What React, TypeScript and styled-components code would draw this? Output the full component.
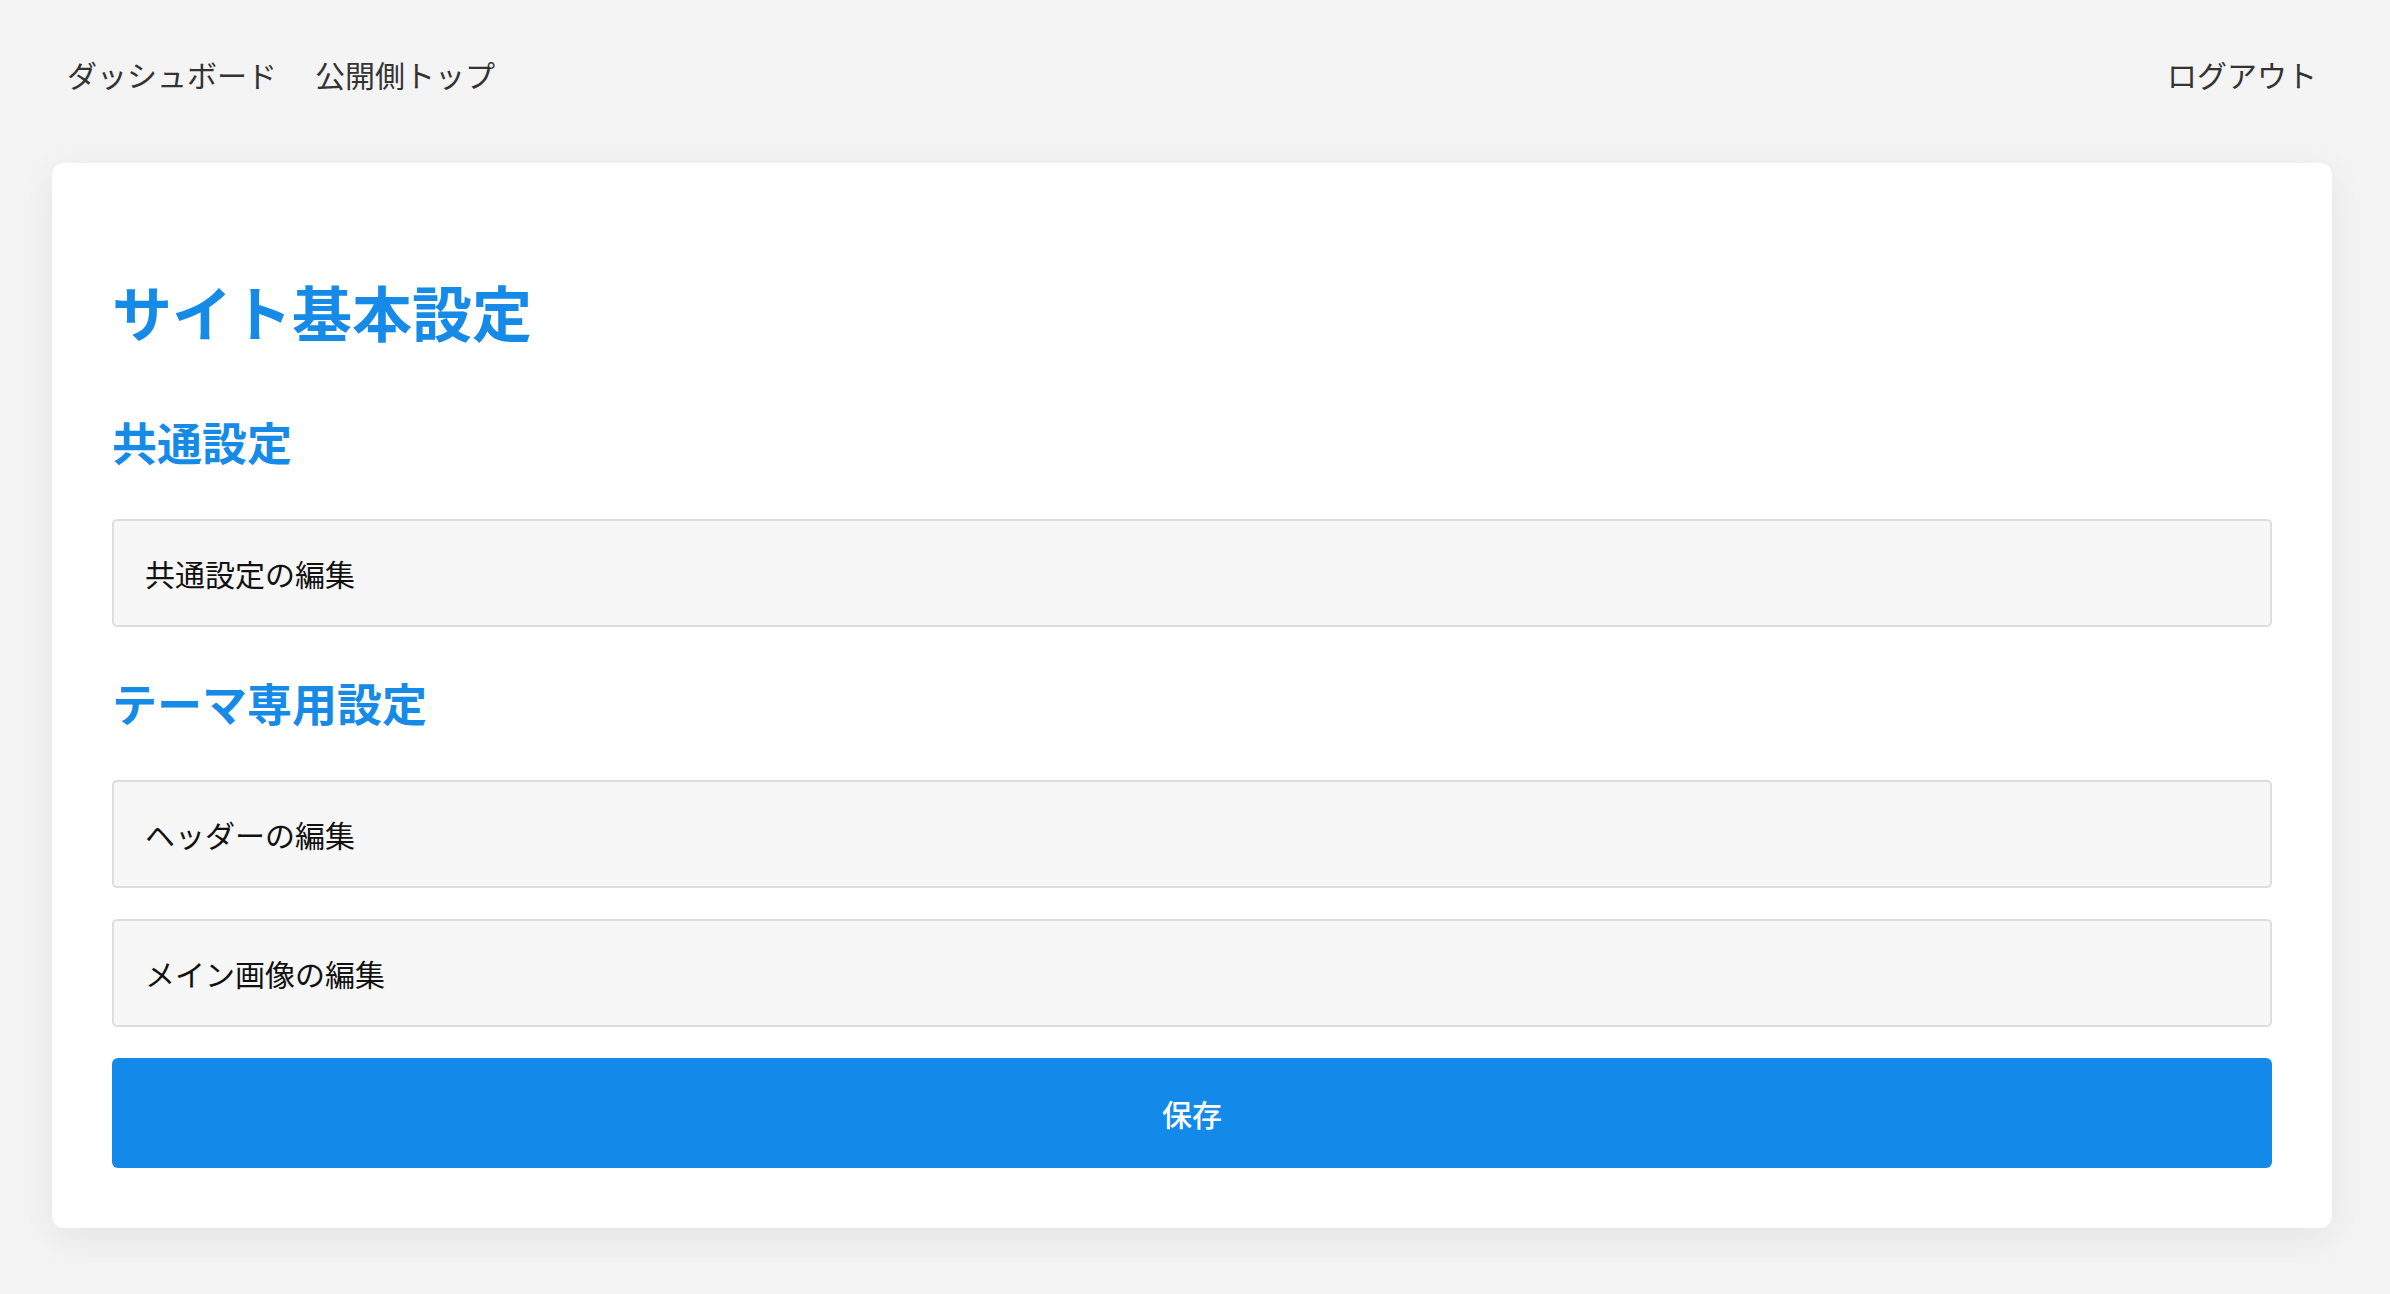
import React from "react";
import styled, { createGlobalStyle } from "styled-components";

const GlobalStyle = createGlobalStyle`
  html, body {
    margin: 0;
    padding: 0;
    background: #f4f4f4;
    font-family: "Noto Sans CJK JP", "Noto Sans", sans-serif;
  }
  * { box-sizing: border-box; }
`;

const Page = styled.div`
  min-height: 1294px;
  background: #f4f4f4;
`;

const Header = styled.header`
  display: flex;
  justify-content: space-between;
  align-items: center;
  height: 163px;
  padding: 4px 73px 18px 67px;
`;

const NavGroup = styled.nav`
  display: flex;
  align-items: center;
  gap: 38px;
`;

const NavLink = styled.a`
  font-size: 30px;
  line-height: 45px;
  color: #333333;
  text-decoration: none;
  cursor: pointer;
`;

const Card = styled.main`
  margin: 0 58px 0 52px;
  background: #ffffff;
  border-radius: 12px;
  box-shadow: 0 10px 40px rgba(0, 0, 0, 0.07);
  padding: 112px 60px 60px;
  display: flex;
  flex-direction: column;
`;

const Title = styled.h1`
  margin: 0;
  font-size: 60px;
  line-height: 72px;
  font-weight: 600;
  color: #168ae7;
`;

const SectionTitle = styled.h2<{ $top: number }>`
  margin: ${(p) => p.$top}px 0 50px;
  font-size: 45px;
  line-height: 54px;
  font-weight: 600;
  color: #168ae7;
`;

const EditRow = styled.button<{ $gap?: number }>`
  display: flex;
  align-items: center;
  width: 100%;
  height: 108px;
  margin: 0 0 ${(p) => p.$gap ?? 0}px;
  padding: 0 31px;
  background: #f7f7f7;
  border: 2px solid #dddddd;
  border-radius: 5px;
  font-family: inherit;
  font-size: 30px;
  color: #111111;
  text-align: left;
  cursor: pointer;
`;

const SaveButton = styled.button`
  width: 100%;
  height: 110px;
  border: none;
  border-radius: 6px;
  background: #1389e9;
  color: #ffffff;
  font-family: inherit;
  font-size: 30px;
  font-weight: 500;
  cursor: pointer;
`;

export default function App() {
  return (
    <Page>
      <GlobalStyle />
      <Header>
        <NavGroup>
          <NavLink>ダッシュボード</NavLink>
          <NavLink>公開側トップ</NavLink>
        </NavGroup>
        <NavLink>ログアウト</NavLink>
      </Header>
      <Card>
        <Title>サイト基本設定</Title>
        <SectionTitle $top={68}>共通設定</SectionTitle>
        <EditRow>共通設定の編集</EditRow>
        <SectionTitle $top={49}>テーマ専用設定</SectionTitle>
        <EditRow $gap={31}>ヘッダーの編集</EditRow>
        <EditRow $gap={31}>メイン画像の編集</EditRow>
        <SaveButton>保存</SaveButton>
      </Card>
    </Page>
  );
}
